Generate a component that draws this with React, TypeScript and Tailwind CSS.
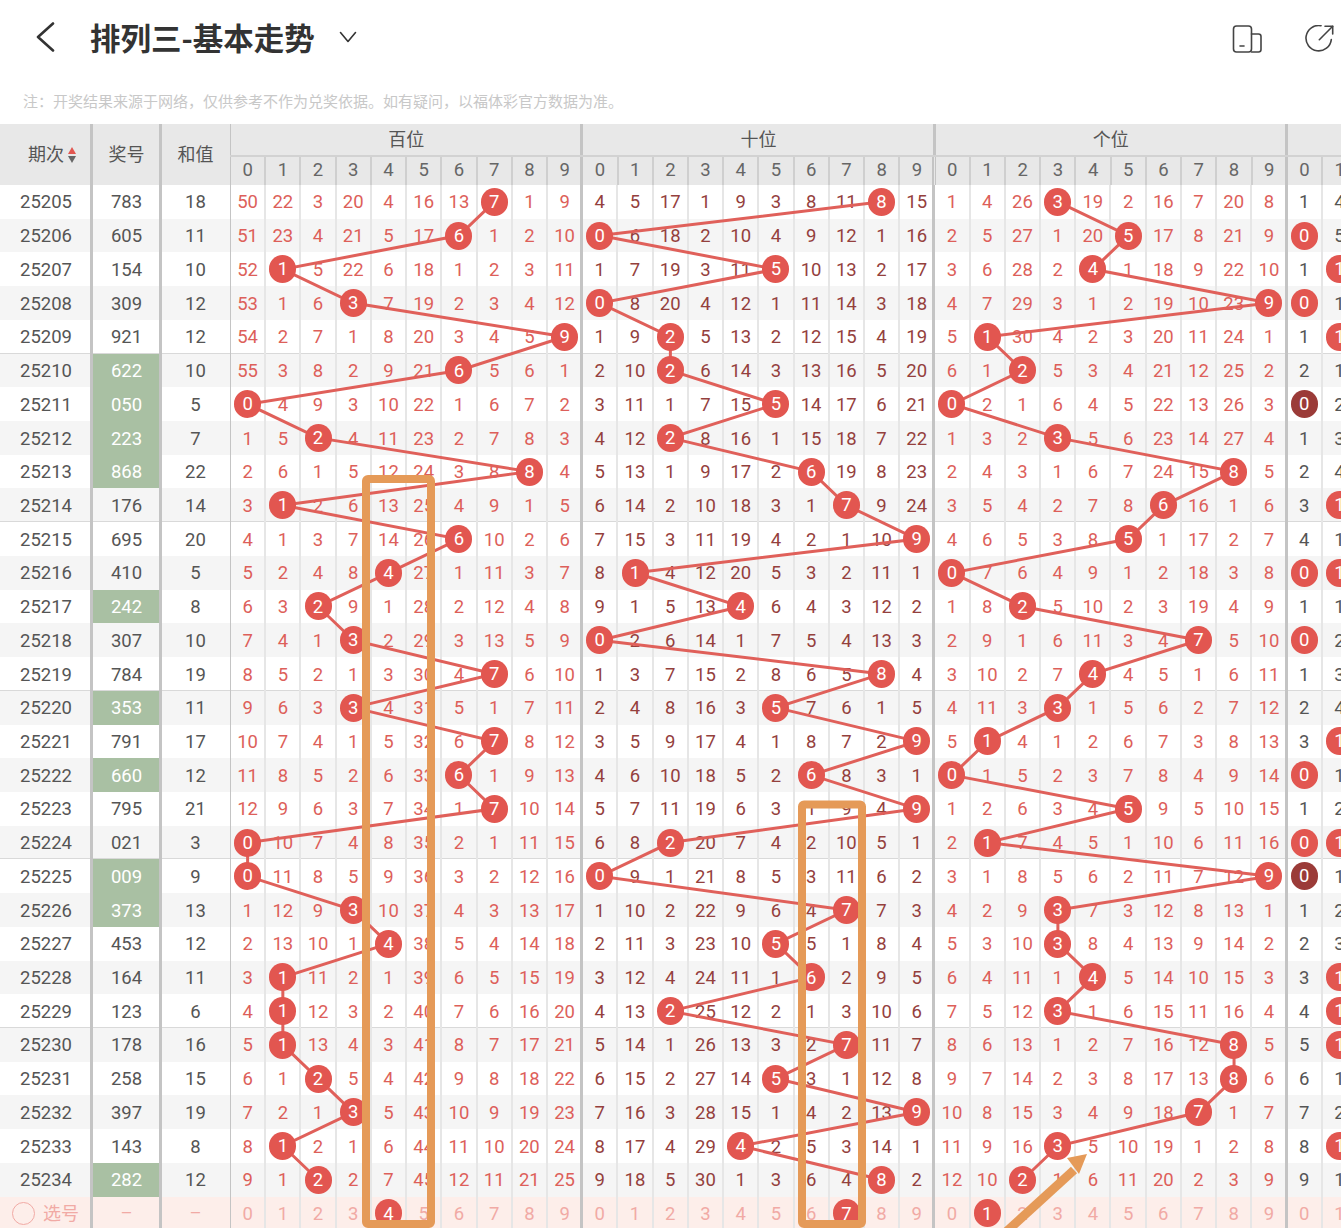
import React from "react";

const draws = ["783", "605", "154", "309", "921", "622", "050", "223", "868", "176", "695", "410", "242", "307", "784", "353", "791", "660", "795", "021", "009", "373", "453", "164", "123", "178", "258", "397", "143", "282"];

// omission values of the first row, the rest follows from the draws
const firstRow = [
  [50, 22, 3, 20, 4, 16, 13, 0, 1, 9],
  [4, 5, 17, 1, 9, 3, 8, 11, 0, 15],
  [1, 4, 26, 0, 19, 2, 16, 7, 20, 8],
];
const distFirst = [1, 4];

const CELL = 35.23;
const ROW = 33.72;
const HEAD = 61;
const TOP = 230;
const digits = [0, 1, 2, 3, 4, 5, 6, 7, 8, 9];

const rows: number[][][] = [];
draws.forEach((draw, r) => {
  const groups = [0, 1, 2].map((g) =>
    digits.map((d) => {
      if (Number(draw[g]) === d) return 0;
      return r === 0 ? firstRow[g][d] : rows[r - 1][g][d] + 1;
    })
  );
  const dist = [0, 1].map((d) => {
    if (draw.includes(String(d))) return 0;
    return r === 0 ? distFirst[d] : rows[r - 1][3][d] + 1;
  });
  rows.push([...groups, dist]);
});

const cellX = (g: number, d: number) => TOP + g * CELL * 10 + CELL * (d + 0.5);
const cellY = (r: number) => HEAD + ROW * (r + 0.5);

const bodyLine = (i: number) =>
  i === 0
    ? "shadow-[inset_1px_0_0_#c4c4c4,inset_-1px_0_0_#e6e6e6]"
    : i === 9
      ? "shadow-[inset_1px_0_0_#e6e6e6,inset_-2px_0_0_#c4c4c4]"
      : "shadow-[inset_1px_0_0_#e6e6e6,inset_-1px_0_0_#e6e6e6]";

const headLine = (i: number) =>
  i === 0
    ? "shadow-[inset_1px_0_0_#c4c4c4,inset_-1px_0_0_#cfcfcf]"
    : i === 9
      ? "shadow-[inset_1px_0_0_#cfcfcf,inset_-2px_0_0_#c4c4c4]"
      : "shadow-[inset_1px_0_0_#cfcfcf,inset_-1px_0_0_#cfcfcf]";

const Ball = ({ n, dark }: { n: number; dark?: boolean }) => (
  <span className={`relative z-10 w-[27px] h-[28px] pt-[2px] rounded-full flex items-center justify-center text-white ${dark ? "bg-[#9b3b38]" : "bg-[#e25650]"}`}>
    {n}
  </span>
);

const HeadGroup = ({ label, count }: { label: string; count: number }) => (
  <div className="shrink-0 flex flex-col" style={{ width: count * CELL }}>
    <div className="h-[30.5px] flex items-center justify-center text-[18px] text-[#555] shadow-[inset_1px_0_0_#c4c4c4,inset_-2px_0_0_#c4c4c4]">{label}</div>
    <div className="h-[30.5px] flex border-t-2 border-[#d2d2d2]">
      {digits.slice(0, count).map((d) => (
        <div key={d} className={`w-[35.23px] pt-[1px] shrink-0 flex items-center justify-center text-[#666] ${headLine(d)}`}>
          {d}
        </div>
      ))}
    </div>
  </div>
);

const textColors = ["text-[#dd5f5a]", "text-[#94403d]", "text-[#dd5f5a]", "text-[#555]"];

const App = () => {
  const lines = [0, 1, 2].map((g) =>
    draws.map((draw, r) => `${cellX(g, Number(draw[g]))},${cellY(r)}`).join(" ")
  );

  return (
    <div className="relative w-[1341px] h-[1228px] overflow-hidden bg-white font-[Roboto,'Noto_Sans_CJK_SC',sans-serif]">
      {/* top bar */}
      <div className="h-[74px] flex items-center justify-between pl-[36px] pr-[7px]">
        <div className="flex items-center">
          <svg width="19" height="30" viewBox="0 0 19 30" fill="none" stroke="#333" strokeWidth="2.6" strokeLinecap="round" strokeLinejoin="round">
            <path d="M17 1.5 2 15l15 13.5" />
          </svg>
          <span className="ml-[35px] text-[30.5px] leading-none font-bold text-[#333] font-['Noto_Sans_CJK_SC',sans-serif]">排列三-基本走势</span>
          <svg className="ml-[24px]" width="18" height="12" viewBox="0 0 18 12" fill="none" stroke="#333" strokeWidth="1.6" strokeLinecap="round" strokeLinejoin="round">
            <path d="M1.5 1.5 9 10.5l7.5-9" />
          </svg>
        </div>
        <div className="flex items-center gap-[42px] pt-[3px]">
          <svg width="30" height="28" viewBox="0 0 30 28" fill="none" stroke="#444" strokeWidth="1.6" strokeLinecap="round" strokeLinejoin="round">
            <rect x="1.5" y="1" width="18" height="26" rx="3" />
            <path d="M19.5 9h7a2.5 2.5 0 0 1 2.5 2.5V24.500a2.500 2.500 0 0 1-2.500 2.500h-7" />
            <path d="M8 21h4" />
          </svg>
          <svg width="30" height="28" viewBox="0 0 30 28" fill="none" stroke="#444" strokeWidth="1.6" strokeLinecap="round" strokeLinejoin="round">
            <path d="M17 .7A12.700 12.700 0 1 0 27.300 14.600" />
            <path d="M15.300 14.700 28.700 1.300" />
            <path d="M21 1.300h7.700V9" />
          </svg>
        </div>
      </div>

      {/* note */}
      <div className="h-[50px] pt-[17px] pl-[23px] text-[15px] leading-[20px] text-[#c8c8c8] font-['Noto_Sans_CJK_SC',sans-serif]">
        注：开奖结果来源于网络，仅供参考不作为兑奖依据。如有疑问，以福体彩官方数据为准。
      </div>

      {/* trend table */}
      <div className="relative w-[1360px] text-[18.5px] text-[#555]">
        <div className="h-[61px] flex bg-[#e8e8e8]">
          <div className="w-[92px] shrink-0 flex items-center justify-center gap-[4px] pl-[12px] text-[18px] shadow-[inset_-2px_0_0_#c4c4c4]">
            期次
            <span className="flex flex-col gap-[2px]">
              <span className="w-0 h-0 border-x-[4.5px] border-x-transparent border-b-[7px] border-b-[#e25650]" />
              <span className="w-0 h-0 border-x-[4.5px] border-x-transparent border-t-[7px] border-t-[#666]" />
            </span>
          </div>
          <div className="w-[69px] shrink-0 flex items-center justify-center text-[18px] shadow-[inset_1px_0_0_#c4c4c4,inset_-2px_0_0_#c4c4c4]">奖号</div>
          <div className="w-[69px] shrink-0 flex items-center justify-center text-[18px] shadow-[inset_1px_0_0_#c4c4c4]">和值</div>
          <HeadGroup label="百位" count={10} />
          <HeadGroup label="十位" count={10} />
          <HeadGroup label="个位" count={10} />
          <HeadGroup label="" count={2} />
        </div>

        {draws.map((draw, r) => {
          const sum = draw.split("").reduce((a, c) => a + Number(c), 0);
          const pair = new Set(draw).size < 3;
          return (
            <div key={draw + r} className={`h-[33.72px] flex ${r % 2 ? "bg-[#f5f5f5]" : "bg-white"} ${r % 5 === 4 && r < 29 ? "shadow-[inset_0_-1px_0_#d9d9d9]" : ""}`}>
              <div className="w-[92px] shrink-0 pt-[3px] flex items-center justify-center shadow-[inset_-2px_0_0_#c4c4c4]">{25205 + r}</div>
              <div className={`w-[69px] shrink-0 pt-[3px] flex items-center justify-center shadow-[inset_1px_0_0_#c4c4c4,inset_-2px_0_0_#c4c4c4] ${pair ? "bg-[#a9c0a3] text-white" : ""}`}>{draw}</div>
              <div className="w-[69px] shrink-0 pt-[3px] flex items-center justify-center shadow-[inset_1px_0_0_#c4c4c4]">{sum}</div>
              {rows[r].map((group, g) =>
                group.map((v, d) => (
                  <div key={`${g}-${d}`} className={`w-[35.23px] shrink-0 flex items-center justify-center ${v === 0 ? "" : "pt-[3px]"} ${textColors[g]} ${bodyLine(d)}`}>
                    {v === 0 ? (
                      <Ball n={d} dark={g === 3 && draw.split(String(d)).length > 2} />
                    ) : (
                      v
                    )}
                  </div>
                ))
              )}
            </div>
          );
        })}

        {/* pick row */}
        <div className="h-[33.72px] flex bg-[#fdeeea] text-[#f1aaa5]">
          <div className="w-[92px] shrink-0 flex items-center gap-[8px] pl-[12px] shadow-[inset_-2px_0_0_#c4c4c4]">
            <span className="w-[23px] h-[23px] rounded-full border-[1.5px] border-[#f1aaa5]" />
            <span className="text-[18px]">选号</span>
          </div>
          <div className="w-[69px] shrink-0 flex items-center justify-center shadow-[inset_1px_0_0_#c4c4c4,inset_-2px_0_0_#c4c4c4]">–</div>
          <div className="w-[69px] shrink-0 flex items-center justify-center shadow-[inset_1px_0_0_#c4c4c4]">–</div>
          {[0, 1, 2, 3].map((g) =>
            digits.slice(0, g === 3 ? 2 : 10).map((d) => {
              const picked = (g === 0 && d === 4) || (g === 1 && d === 7) || (g === 2 && d === 1);
              return (
                <div key={`${g}-${d}`} className={`w-[35.23px] shrink-0 flex items-center justify-center ${picked ? "" : "pt-[3px]"} ${bodyLine(d)}`}>
                  {picked ? <Ball n={d} /> : d}
                </div>
              );
            })
          )}
        </div>

        {/* trend lines, under the balls and over the numbers */}
        <svg className="absolute left-0 top-0 z-[5] pointer-events-none" width="1360" height="1104" fill="none" stroke="#e0605a" strokeWidth="3">
          {lines.map((points, g) => (
            <polyline key={g} points={points} />
          ))}
        </svg>
      </div>

      {/* orange marks drawn on the shot */}
      <svg className="absolute left-0 top-0 z-20 pointer-events-none" width="1341" height="1228" fill="none" stroke="#e59a58" strokeWidth="8">
        <rect x="366" y="479" width="65" height="745" rx="2" />
        <rect x="802" y="804.500" width="60" height="419.500" rx="2" />
        <path d="M1006 1232 1074 1170" strokeWidth="9" />
        <polygon points="1087,1154 1067,1158 1079,1174" fill="#e59a58" stroke="none" />
      </svg>
    </div>
  );
};

export default App;
